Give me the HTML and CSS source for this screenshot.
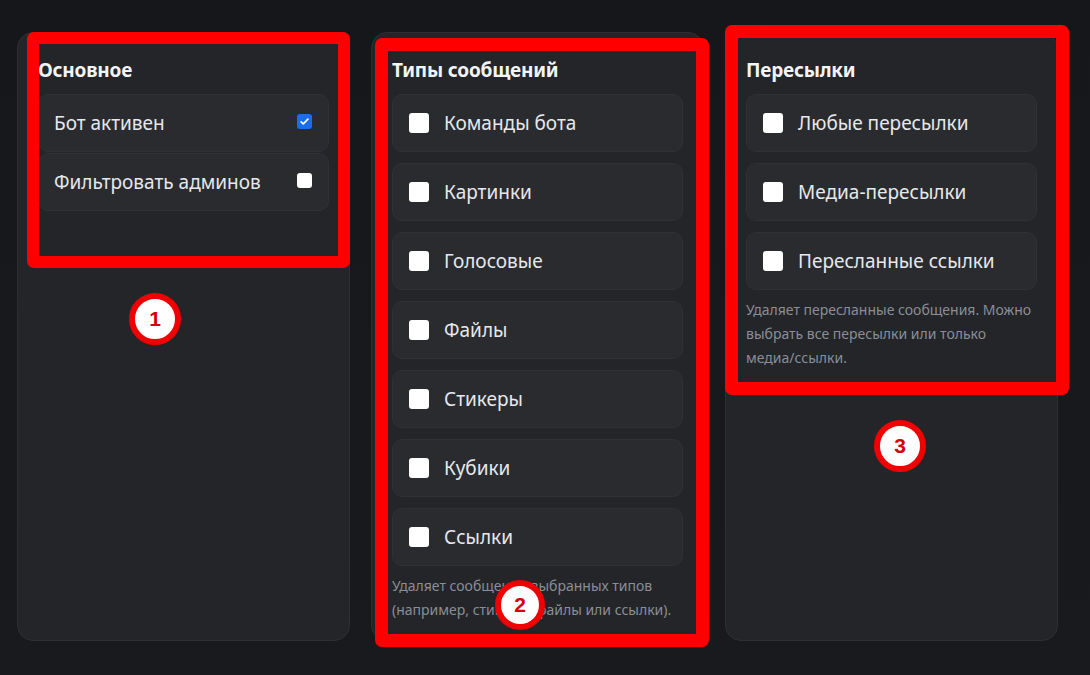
FILE: index.html
```html
<!DOCTYPE html>
<html lang="ru">
<head>
<meta charset="utf-8">
<title>Настройки фильтра</title>
<link rel="stylesheet" href="styles.css">
</head>
<body>
<main class="page">
  <section class="card">
    <h2 class="card-title">Основное</h2>
    <div class="list list-tight">
      <label class="row row-switch">
        <span class="row-label">Бот активен</span>
        <span class="box box-sm box-on">
          <svg viewBox="0 0 16 16" width="11" height="11"><path d="M3 8.5l3.2 3L13 4.5" fill="none" stroke="#fff" stroke-width="2.4" stroke-linecap="round" stroke-linejoin="round"/></svg>
        </span>
      </label>
      <label class="row row-switch">
        <span class="row-label">Фильтровать админов</span>
        <span class="box box-sm"></span>
      </label>
    </div>
  </section>

  <section class="card">
    <h2 class="card-title">Типы сообщений</h2>
    <div class="list">
      <label class="row"><span class="box"></span><span class="row-label">Команды бота</span></label>
      <label class="row"><span class="box"></span><span class="row-label">Картинки</span></label>
      <label class="row"><span class="box"></span><span class="row-label">Голосовые</span></label>
      <label class="row"><span class="box"></span><span class="row-label">Файлы</span></label>
      <label class="row"><span class="box"></span><span class="row-label">Стикеры</span></label>
      <label class="row"><span class="box"></span><span class="row-label">Кубики</span></label>
      <label class="row"><span class="box"></span><span class="row-label">Ссылки</span></label>
    </div>
    <p class="hint">Удаляет сообщения выбранных типов (например, стикеры, файлы или ссылки).</p>
  </section>

  <section class="card">
    <h2 class="card-title">Пересылки</h2>
    <div class="list">
      <label class="row"><span class="box"></span><span class="row-label">Любые пересылки</span></label>
      <label class="row"><span class="box"></span><span class="row-label">Медиа‑пересылки</span></label>
      <label class="row"><span class="box"></span><span class="row-label">Пересланные ссылки</span></label>
    </div>
    <p class="hint">Удаляет пересланные сообщения. Можно выбрать все пересылки или только медиа/ссылки.</p>
  </section>

  <!-- callout frames and numbered markers -->
  <div class="frame frame-1"></div>
  <div class="frame frame-2"></div>
  <div class="frame frame-3"></div>
  <span class="marker marker-1">1</span>
  <span class="marker marker-2">2</span>
  <span class="marker marker-3">3</span>
</main>
</body>
</html>
```

FILE: styles.css
```css
* { box-sizing: border-box; }

html, body {
  margin: 0;
  height: 100%;
}

body {
  background: linear-gradient(180deg, #15171b 0%, #191a1e 100%);
  font-family: "Noto Sans", "Open Sans", sans-serif;
  color: #e7e9ec;
  overflow: hidden;
}

.page {
  position: relative;
  display: grid;
  grid-template-columns: repeat(3, 333px);
  column-gap: 21px;
  padding: 32px 17px 0;
  height: 675px;
}

.card {
  height: 609px;
  background: #232529;
  border: 1px solid #2d2f34;
  border-radius: 16px;
  padding: 20px;
}

.card-title {
  margin: 4px 0 11px;
  font-size: 19px;
  line-height: 26px;
  font-weight: 700;
  color: #f3f4f6;
  letter-spacing: -0.2px;
}

.list {
  display: flex;
  flex-direction: column;
  gap: 11px;
}

.list-tight { gap: 1px; }

.row {
  display: flex;
  align-items: center;
  gap: 15px;
  height: 58px;
  padding: 0 16px;
  background: #292b2f;
  border: 1px solid #2f3136;
  border-radius: 10px;
  cursor: pointer;
}

.row-switch {
  justify-content: space-between;
  padding: 0 16px 0 15px;
}

.row-label {
  font-size: 19px;
  color: #e6e8eb;
}

.box {
  flex: none;
  width: 20px;
  height: 20px;
  border-radius: 3px;
  background: #ffffff;
  display: flex;
  align-items: center;
  justify-content: center;
}

.box-sm {
  width: 15px;
  height: 15px;
  margin-top: -3px;
}

.box-on { background: #1a6fe8; }

.hint {
  margin: 8px 0 0;
  font-size: 14px;
  line-height: 24px;
  color: #8a8e97;
}

/* red callout frames */
.frame {
  position: absolute;
  border: 13px solid #ff0000;
  border-radius: 7px;
  pointer-events: none;
}
.frame-1 { left: 27px; top: 32px; width: 323px; height: 236px; border-width: 12px; }
.frame-2 { left: 375px; top: 38px; width: 334px; height: 609px; }
.frame-3 { left: 725px; top: 25px; width: 344px; height: 370px; }

/* numbered markers */
.marker {
  position: absolute;
  width: 52px;
  height: 52px;
  border-radius: 50%;
  background: #ffffff;
  border: 6px solid #f00000;
  color: #d6000c;
  font-family: "Liberation Sans", Arial, sans-serif;
  font-weight: 700;
  font-size: 21px;
  display: flex;
  align-items: center;
  justify-content: center;
}
.marker-1 { left: 129px; top: 293px; }
.marker-2 { left: 495px; top: 580px; width: 50px; height: 50px; }
.marker-3 { left: 874px; top: 420px; }
```
